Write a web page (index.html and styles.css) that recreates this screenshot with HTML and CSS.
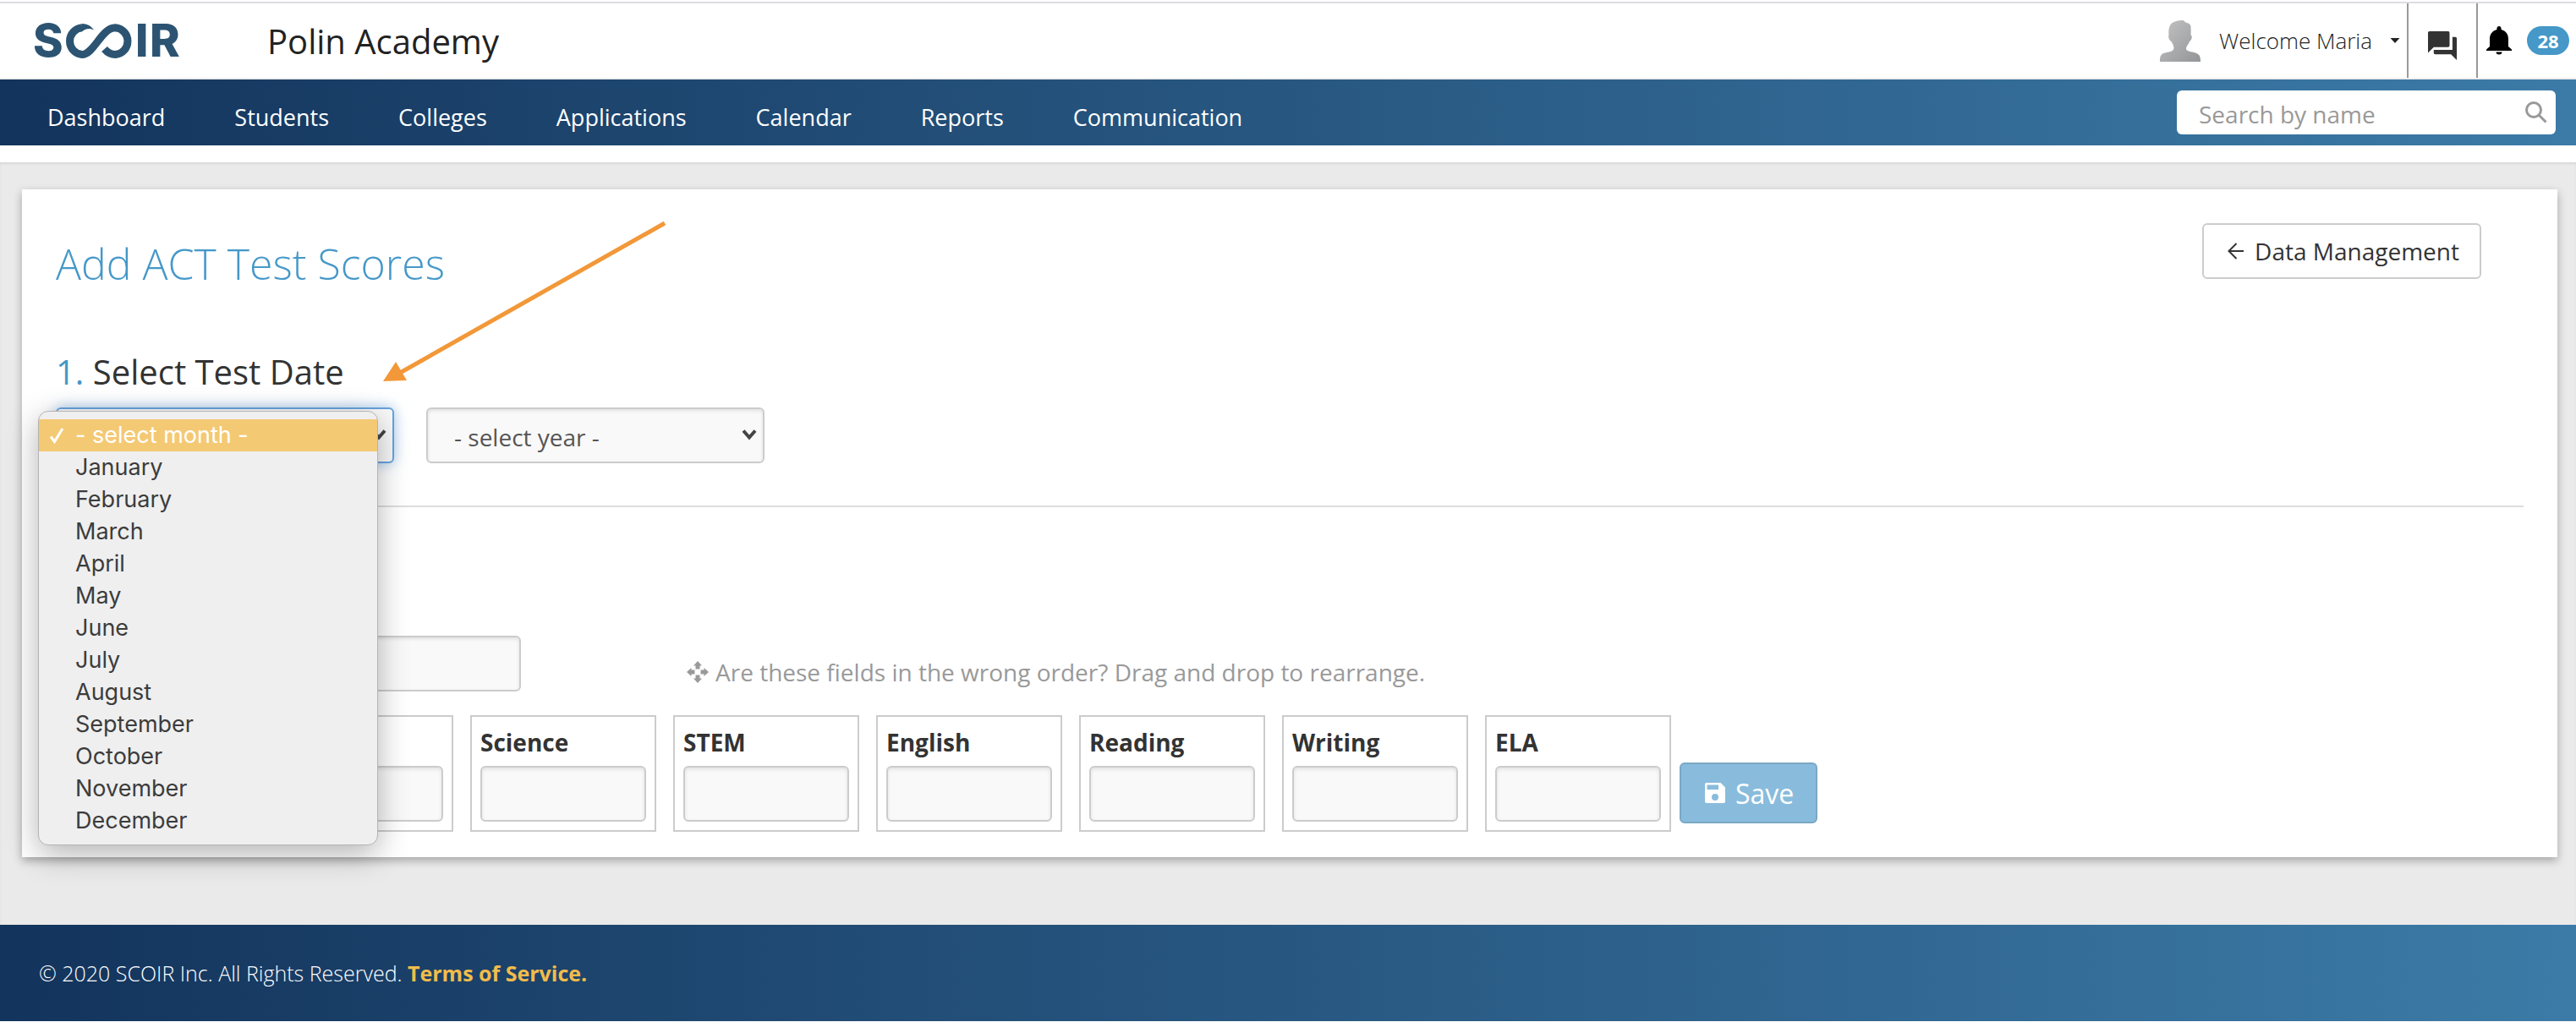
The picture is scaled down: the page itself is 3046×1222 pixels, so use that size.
FILE: index.html
```html
<!DOCTYPE html>
<html lang="en">
  <head>
    <meta charset="UTF-8" />
    <meta name="viewport" content="width=device-width, initial-scale=1.0" />
    <title>Add ACT Test Scores</title>
    <link rel="stylesheet" href="styles.css">
  </head>
  <body>
    <header class="topbar">
      <a href="#" class="logo" aria-label="SCOIR">
        <svg width="188" height="72" viewBox="32 12 188 72">
          <text x="37" y="67">S</text>
          <path class="loop" d="M95 32.800 A15.700 15.900 0 0 0 95 64.500 C109 64.500 118 32.800 134.500 32.800 A15.700 15.900 0 0 1 134.500 64.500 C129 64.500 125 62 121.500 58" />
          <path d="M94.500 28.100 C101 28 106 31 109 35.500 C104 33 100 33.500 94.500 37.500 Z" />
          <text x="158" y="67">I</text>
          <text x="175" y="67">R</text>
        </svg>
      </a>
      <span class="school">Polin Academy</span>
      <button class="user">
        <svg width="50" height="50" viewBox="0 0 50 50">
          <defs>
            <linearGradient id="grey" x1="0" y1="0" x2="1" y2="1">
              <stop offset="0" stop-color="#c4c4c4" />
              <stop offset="1" stop-color="#929497" />
            </linearGradient>
          </defs>
          <path fill="url(#grey)" d="M1 50 C1 43 2 41 7 39.500 C13 38 17 38 17.500 34 C17.500 31 16 29 14.500 26 C12 25.500 10.500 20 11.500 18.500 C11 12 12 8 14 5.500 C17 2 22 1.500 26 1 C30 0.500 30 3 33 4 C37 5 38 8 37.500 11 C38 14 37.500 16 37.500 18.500 C40 19 38.500 25 36 26 C35 30 32 31 32 35 C33 38 38 38 43 39.500 C48 41 49 44 49 50 Z" />
        </svg>
        <span>Welcome Maria</span>
        <svg class="caret" width="12" height="6" viewBox="0 0 12 6"><path d="M0.500 0 H11.500 L6 6 Z" fill="#222" /></svg>
      </button>
      <button class="chat" aria-label="Messages">
        <svg width="34" height="34" viewBox="2 2 20 20"><path fill="#333" d="M21 6h-2v9H6v2c0 .55.450 1 1 1h11l4 4V7c0-.55-.45-1-1-1zm-4 6V3c0-.55-.45-1-1-1H3c-.55 0-1 .45-1 1v14l4-4h10c.55 0 1-.45 1-1z" /></svg>
      </button>
      <button class="alerts">
        <svg width="30" height="34" viewBox="0 0 30 34"><path d="M15 0 C13.500 0 12.400 1.200 12.400 2.800 V4 C7 5.500 4 9.500 4 15 V24 L0 27.500 V29 H30 V27.500 L26 24 V15 C26 9.500 23 5.500 17.600 4 V2.800 C17.600 1.200 16.500 0 15 0 Z M11.500 30.500 A3.500 3 0 0 0 18.500 30.500 Z" /></svg>
        <span class="badge">28</span>
      </button>
    </header>

    <nav class="menu">
      <a href="#">Dashboard</a>
      <a href="#">Students</a>
      <a href="#">Colleges</a>
      <a href="#">Applications</a>
      <a href="#">Calendar</a>
      <a href="#">Reports</a>
      <a href="#">Communication</a>
      <div class="search">
        <input type="text" placeholder="Search by name" aria-label="Search by name" />
        <svg width="26" height="26" viewBox="0 0 26 26"><circle cx="10" cy="10" r="8.500" /><path d="M16 16 L24.500 24.500" /></svg>
      </div>
    </nav>

    <main>
      <section class="card">
        <div class="titleRow">
          <h1>Add ACT Test Scores</h1>
          <button class="back">
            <svg width="20" height="20" viewBox="0 0 20 20"><path d="M19 10 H2 M10.500 1 L1.500 10 L10.500 19" /></svg>
            Data Management
          </button>
        </div>

        <h2><span>1.</span> Select Test Date</h2>
        <div class="dates">
          <div class="selectBox">
            <select class="active" aria-label="Month">
              <option>- select month -</option>
            </select>
            <svg class="chevron" width="18" height="14" viewBox="0 0 18 14"><path d="M2 2.500 L9 10.500 L16 2.500" /></svg>
            <ul class="months">
              <li class="chosen">
                <svg width="18" height="20" viewBox="0 0 18 20"><path d="M2 11.500 L6.500 17.500 L16 2" /></svg>
                - select month -
              </li>
              <li>January</li>
              <li>February</li>
              <li>March</li>
              <li>April</li>
              <li>May</li>
              <li>June</li>
              <li>July</li>
              <li>August</li>
              <li>September</li>
              <li>October</li>
              <li>November</li>
              <li>December</li>
            </ul>
            <svg class="pointer" width="340" height="196" viewBox="0 0 340 196">
              <path class="line" d="M333 4 L20 181" />
              <path class="head" d="M0 191 L15 168 L28 190 Z" />
            </svg>
          </div>
          <div class="selectBox">
            <select aria-label="Year">
              <option>- select year -</option>
            </select>
            <svg class="chevron" width="18" height="14" viewBox="0 0 18 14"><path d="M2 2.500 L9 10.500 L16 2.500" /></svg>
          </div>
        </div>

        <hr />

        <div class="studentRow">
          <input type="text" class="student" aria-label="Student" />
          <p class="hint">
            <svg width="26" height="26" viewBox="0 0 26 26"><path d="M13 0 L18 5.500 H15.500 V9.500 H10.500 V5.500 H8 Z M13 26 L8 20.500 H10.500 V16.500 H15.500 V20.500 H18 Z M0 13 L5.500 8 V10.500 H9.500 V15.500 H5.500 V18 Z M26 13 L20.500 18 V15.500 H16.500 V10.500 H20.500 V8 Z" /></svg>
            Are these fields in the wrong order? Drag and drop to rearrange.
          </p>
        </div>

        <form class="scores">
          <div class="score"><input type="text" aria-label="Composite" /></div>
          <div class="score"><input type="text" aria-label="Math" /></div>
          <div class="score"><label for="science">Science</label><input type="text" id="science" /></div>
          <div class="score"><label for="stem">STEM</label><input type="text" id="stem" /></div>
          <div class="score"><label for="english">English</label><input type="text" id="english" /></div>
          <div class="score"><label for="reading">Reading</label><input type="text" id="reading" /></div>
          <div class="score"><label for="writing">Writing</label><input type="text" id="writing" /></div>
          <div class="score"><label for="ela">ELA</label><input type="text" id="ela" /></div>
          <button type="button" class="save">
            <svg width="24" height="24" viewBox="0 0 24 24"><path fill-rule="evenodd" d="M2 0 H18.500 L24 5.500 V22 A2 2 0 0 1 22 24 H2 A2 2 0 0 1 0 22 V2 A2 2 0 0 1 2 0 Z M2.500 2.500 V8 H16 V2.500 Z M12 13 A4 4 0 1 0 12 21 A4 4 0 1 0 12 13 Z" /></svg>
            Save
          </button>
        </form>
      </section>
    </main>

    <footer>
      <p>© 2020 SCOIR Inc. All Rights Reserved. <a href="#">Terms of Service.</a></p>
    </footer>
  </body>
</html>
```
FILE: styles.css
```css
* {
  box-sizing: border-box;
}
body {
  margin: 0;
  padding-top: 2px;
  background-color: white;
  color: #333;
  font-family: "Open Sans", sans-serif;
  font-size: 28px;
}
button,
input,
select {
  font-family: inherit;
  font-size: inherit;
}
svg {
  display: block;
  flex-shrink: 0;
}

/* top bar */
.topbar {
  display: flex;
  align-items: center;
  height: 92px;
  padding-left: 34px;
  border-top: 2px solid #dcdce4;
  border-bottom: 2px solid #eee;
  color: #222;
}
.logo {
  width: 282px;
}
.logo svg {
  fill: #2c5472;
}
.logo text {
  font-family: Inter, sans-serif;
  font-size: 54px;
  font-weight: 800;
}
.logo .loop {
  fill: none;
  stroke: #2c5472;
  stroke-width: 9;
}
.school {
  font-size: 40px;
}
.topbar button {
  display: flex;
  align-items: center;
  height: 88px;
  padding: 0;
  border: none;
  background: none;
  color: #222;
}
.topbar .user {
  gap: 21px;
  margin-left: auto;
  padding-right: 8px;
  font-size: 26px;
  font-weight: 300;
}
.topbar .chat {
  padding: 12px 23px 0 23px;
  border: solid #999;
  border-width: 0 2px;
}
.topbar .alerts {
  gap: 18px;
  padding: 0 8px 0 10px;
}
.badge {
  width: 50px;
  border-radius: 17px;
  background-color: #4598c8;
  color: white;
  font-size: 22px;
  font-weight: 700;
  line-height: 34px;
  text-align: center;
}

/* menu */
.menu {
  display: flex;
  align-items: center;
  gap: 82px;
  height: 78px;
  padding: 0 24px 0 56px;
  background: linear-gradient(90deg, #13345c, #3c7ba7);
}
.menu a {
  padding-top: 10px;
  color: white;
  font-size: 27px;
  text-decoration: none;
}
.search {
  display: flex;
  align-items: center;
  width: 448px;
  height: 52px;
  margin-left: auto;
  padding: 0 10px 0 26px;
  border-radius: 6px;
  background-color: white;
}
.search input {
  flex: 1;
  min-width: 0;
  padding: 3px 0 0 0;
  border: none;
  background: none;
}
.search input::placeholder {
  color: #999;
}
.search svg {
  fill: none;
  stroke: #999;
  stroke-width: 3;
}

/* content */
main {
  margin-top: 20px;
  padding: 32px 22px 80px 26px;
  background-color: #eaeaea;
  box-shadow: inset 0 2px 2px #d8d8d8;
}
.card {
  padding: 40px 40px 30px 40px;
  background-color: white;
  box-shadow: 0 4px 10px rgba(0, 0, 0, 0.3);
}
.titleRow {
  display: flex;
  justify-content: space-between;
  align-items: flex-start;
  height: 76px;
  padding-right: 50px;
}
h1 {
  margin: 18px 0 0 0;
  color: #4598c8;
  font-size: 50px;
  font-weight: 300;
  line-height: 60px;
}
.back {
  display: flex;
  align-items: center;
  gap: 12px;
  height: 66px;
  padding: 0 24px 0 28px;
  border: 2px solid #ccc;
  border-radius: 6px;
  background-color: white;
  color: #333;
}
.back svg {
  fill: none;
  stroke: #333;
  stroke-width: 2;
}
h2 {
  margin: 76px 0 18px 0;
  font-size: 40px;
  font-weight: 400;
  line-height: 48px;
}
h2 span {
  color: #4598c8;
}
.dates {
  display: flex;
  gap: 38px;
}
.selectBox {
  position: relative;
  width: 400px;
}
.card select,
.card input {
  display: block;
  width: 100%;
  height: 66px;
  border: 2px solid #ccc;
  border-radius: 6px;
  background-color: #f9f9f9;
  box-shadow: inset 0 2px 4px rgba(0, 0, 0, 0.1);
  color: #555;
}
.card select {
  appearance: none;
  padding: 4px 31px 0 31px;
}
.card select.active {
  border-color: #66a3e0;
  box-shadow: 0 0 16px rgba(102, 163, 224, 0.6);
}
.chevron {
  position: absolute;
  top: 25px;
  right: 9px;
  fill: none;
  stroke: #444;
  stroke-width: 4;
}

/* open month list */
.months {
  position: absolute;
  z-index: 1;
  top: 4px;
  left: -21px;
  width: 402px;
  margin: 0;
  padding: 9px 0;
  border: 1px solid #b4b4b4;
  border-radius: 12px;
  background-color: #efefef;
  box-shadow: 0 10px 36px rgba(0, 0, 0, 0.3);
  color: #3c3c3c;
  font-family: Inter, sans-serif;
  font-size: 27px;
  line-height: 38px;
  list-style: none;
}
.months li {
  padding-left: 43px;
}
.months .chosen {
  display: flex;
  align-items: center;
  gap: 13px;
  padding-left: 12px;
  background-color: #f4c974;
  color: white;
}
.months svg {
  fill: none;
  stroke: white;
  stroke-width: 3;
}
.pointer {
  position: absolute;
  bottom: 92px;
  left: 387px;
}
.pointer .line {
  fill: none;
  stroke: #f29838;
  stroke-width: 5;
}
.pointer .head {
  fill: #f29838;
}

hr {
  margin: 50px 0 152px 0;
  border: none;
  border-top: 2px solid #ddd;
}
.studentRow {
  display: flex;
  align-items: flex-end;
  gap: 196px;
}
.card .student {
  width: 550px;
}
.hint {
  display: flex;
  align-items: center;
  gap: 8px;
  margin: 0;
  color: #999;
  line-height: 46px;
}
.hint svg {
  fill: #999;
}
.scores {
  display: flex;
  align-items: flex-end;
  gap: 20px;
  margin: 28px 0 0 10px;
}
.score {
  display: flex;
  flex-direction: column;
  justify-content: flex-end;
  width: 220px;
  height: 138px;
  padding: 10px;
  border: 2px solid #ccc;
}
.score label {
  margin-bottom: 8px;
  font-weight: 700;
  line-height: 40px;
}
.save {
  display: flex;
  align-items: center;
  gap: 12px;
  height: 72px;
  margin: 0 0 10px -10px;
  padding: 0 26px 0 28px;
  border: 2px solid #79a8c4;
  border-radius: 6px;
  background-color: #89bcdc;
  color: white;
}
.scores .save {
  font-size: 32px;
}
.save svg {
  fill: white;
}

footer {
  display: flex;
  align-items: center;
  height: 114px;
  margin-bottom: 14px;
  padding-left: 46px;
  background: linear-gradient(90deg, #13345c, #3c7ba7);
  color: white;
  font-size: 25px;
  font-weight: 300;
}
footer p {
  margin: 0;
}
footer a {
  color: #f2bc4b;
  font-weight: 700;
  text-decoration: none;
}
```
